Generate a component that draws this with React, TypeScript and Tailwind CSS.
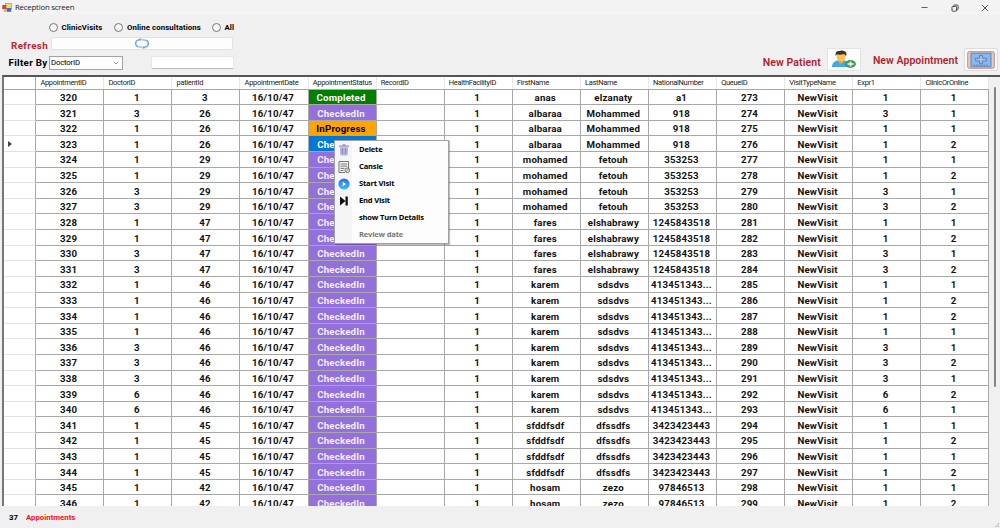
import { Minus, X, ChevronDown } from "lucide-react";
import { clsx } from "clsx";

interface Appointment {
  id: number;
  doctorId: number;
  patientId: number;
  status: string;
  firstName: string;
  lastName: string;
  nationalNumber: string;
  queueId: number;
  clinicOrOnline: number;
}

const COLUMNS = [
  "AppointmentID",
  "DoctorID",
  "patientId",
  "AppointmentDate",
  "AppointmentStatus",
  "RecordID",
  "HealthFacilityID",
  "FirstName",
  "LastName",
  "NationalNumber",
  "QueueID",
  "VisitTypeName",
  "Expr1",
  "ClinicOrOnline",
];

// patient id -> [first name, last name, national number]
const PATIENTS: Record<number, [string, string, string]> = {
  3: ["anas", "elzanaty", "a1"],
  26: ["albaraa", "Mohammed", "918"],
  29: ["mohamed", "fetouh", "353253"],
  47: ["fares", "elshabrawy", "1245843518"],
  46: ["karem", "sdsdvs", "413451343..."],
  45: ["sfddfsdf", "dfssdfs", "3423423443"],
  42: ["hosam", "zezo", "97846513"],
};

// [doctor, patient, clinic or online]
const VISITS: [number, number, number][] = [
  [1, 3, 1],
  [3, 26, 1],
  [1, 26, 1],
  [1, 26, 2],
  [1, 29, 1],
  [1, 29, 2],
  [3, 29, 1],
  [3, 29, 2],
  [1, 47, 1],
  [1, 47, 2],
  [3, 47, 1],
  [3, 47, 2],
  [1, 46, 1],
  [1, 46, 2],
  [1, 46, 2],
  [1, 46, 1],
  [3, 46, 1],
  [3, 46, 2],
  [3, 46, 1],
  [6, 46, 2],
  [6, 46, 1],
  [1, 45, 1],
  [1, 45, 2],
  [1, 45, 1],
  [1, 45, 2],
  [1, 42, 1],
  [1, 42, 2],
];

const SELECTED_ROW = 3;

const appointments: Appointment[] = VISITS.map(([doctorId, patientId, clinicOrOnline], i) => ({
  id: 320 + i,
  doctorId,
  patientId,
  status: i === 0 ? "Completed" : i === 2 ? "InProgress" : "CheckedIn",
  firstName: PATIENTS[patientId][0],
  lastName: PATIENTS[patientId][1],
  nationalNumber: PATIENTS[patientId][2],
  queueId: 273 + i,
  clinicOrOnline,
}));

const TitleBar = () => (
  <div className="flex h-[15px] shrink-0 items-center bg-[#f3f3f3] pl-[2px]">
    <svg viewBox="0 0 10 10" className="h-[10px] w-[10px]">
      <rect x="3.5" y="0.5" width="6" height="5.5" fill="#f4d77a" stroke="#a98b3c" strokeWidth="0.6" />
      <rect x="0.3" y="2" width="4" height="4" fill="#d8432f" />
      <rect x="4.6" y="5" width="4.6" height="3.8" fill="#3e6fc4" />
      <rect x="1.6" y="6.3" width="2.6" height="2.6" fill="#e9b53b" />
    </svg>
    <span className="ml-[3px] font-['Open_Sans',sans-serif] text-[7.8px] tracking-[-0.2px] text-[#222]">
      Reception screen
    </span>
    <div className="ml-auto flex items-center pr-[10px] text-[#333]">
      <Minus className="h-[9px] w-[9px]" strokeWidth={2} />
      <svg viewBox="0 0 8 8" className="ml-[22px] h-[8px] w-[8px]" fill="none" stroke="currentColor" strokeWidth="0.9">
        <rect x="1" y="2.4" width="4.6" height="4.8" rx="0.8" />
        <path d="M2.6 2.2C2.6 1.3 3 1 3.8 1h2c.9 0 1.4.5 1.4 1.4v2.200c0 .8-.4 1.200-1.300 1.200" />
      </svg>
      <X className="ml-[21px] h-[10px] w-[10px]" strokeWidth={2} />
    </div>
  </div>
);

const Radio = ({ label, className }: { label: string; className?: string }) => (
  <label className={clsx("flex items-center gap-[4px]", className)}>
    <span className="h-[9px] w-[9px] rounded-full border border-[#777] bg-[#f6f6f6]" />
    <span className="text-[7.8px] font-bold tracking-[0.1px] text-black">{label}</span>
  </label>
);

const RefreshIcon = () => (
  <svg viewBox="0 0 16 11" className="h-[11px] w-[16px]" fill="none" stroke="#78a6e6" strokeWidth="1.6">
    <path d="M6 1.8C3.5 1.8 1.6 3.4 1.6 5.5c0 1.4 .9 2.6 2.2 3.2" />
    <path d="M10 9.2c2.5 0 4.4-1.6 4.4-3.7 0-1.4-.9-2.6-2.2-3.2" />
    <path d="M5.2 .4h2.6L6.4 3.2zM10.8 10.6H8.2l1.4-2.8z" fill="#78a6e6" stroke="none" />
    <path d="M7.5 1.8h2.6l2.1.8M8.5 9.2H5.9l-2.1-.8" stroke="#8eb6ee" strokeWidth="1.3" />
  </svg>
);

const AddPatientIcon = () => (
  <svg viewBox="0 0 26 19" className="h-[19px] w-[26px]">
    <path d="M1 17c0-4.500 3-6.200 6.500-6.800h5c3.500.6 6.500 2.300 6.500 6.800z" fill="#3ba9ec" />
    <path d="M7.500 9.500h5v2.500l-2.500 2.500-2.500-2.500z" fill="#e6a23c" />
    <ellipse cx="10" cy="6.800" rx="4.400" ry="5" fill="#fcc24f" />
    <path d="M4.800 6C3.900 2.500 6 .6 8 1c3-1.200 7.500-.5 7.500 3.200 0 .7-.2 1.300-.6 1.800-.6-.8-1.200-1.500-2-1.900-2.200.7-4.900.8-6.700.2-.6.400-1 1-1.400 1.700z" fill="#3c3027" />
    <ellipse cx="19.500" cy="14" rx="5.400" ry="3.900" fill="#3f9c55" />
    <path d="M19.500 11.500v5M16.500 14h6" stroke="#fff" strokeWidth="1.500" />
  </svg>
);

const AddAppointmentIcon = () => (
  <svg viewBox="0 0 28 18" className="h-[18px] w-[28px]">
    <rect x="0.7" y="0.7" width="26.6" height="16.6" rx="1.5" fill="#e9c9b9" stroke="#b5837b" strokeWidth="0.9" />
    <rect x="4" y="2.2" width="20" height="13.6" fill="#7cbcf2" stroke="#7474a4" strokeWidth="0.9" />
    <path d="M12.600 4.500h2.800v2.800h4v2.600h-4v2.800h-2.800V9.900h-4V7.300h4z" fill="#9fc9ee" stroke="#6c6fa8" strokeWidth="0.9" />
    <path d="M6.5 14.200h15" stroke="#5b6f9c" strokeWidth="0.9" strokeDasharray="1.5 1" />
  </svg>
);

const Toolbar = () => (
  <div className="flex h-[60px] shrink-0 justify-between pr-[2px]">
    <div className="flex w-[240px] flex-col">
      <div className="flex h-[22px] items-center pt-[3px] pl-[48.5px]">
        <Radio label="ClinicVisits" className="w-[65.5px]" />
        <Radio label="Online consultations" className="w-[97.5px] whitespace-nowrap" />
        <Radio label="All" />
      </div>
      <div className="flex h-[13px] items-center">
        <span className="w-[51px] pt-[4px] pl-[11px] text-[9.8px] leading-none font-bold tracking-[0.4px] text-[#bb2733]">
          Refresh
        </span>
        <div className="flex h-[13px] w-[182px] items-center justify-center rounded-[2px] border border-[#e2e2e2] bg-[#fdfdfd]">
          <RefreshIcon />
        </div>
      </div>
      <div className="flex h-[25px] items-center">
        <span className="w-[49px] pl-[8.5px] text-[9.8px] leading-none font-bold tracking-[0.3px] whitespace-nowrap text-black">
          Filter By
        </span>
        <div className="flex h-[14px] w-[74px] items-center justify-between border border-[#a3a3a3] bg-white pr-[2px] pl-[1px]">
          <span className="text-[7.8px] tracking-[-0.2px] text-black">DoctorID</span>
          <ChevronDown className="h-[8px] w-[8px] text-[#666]" />
        </div>
        <div className="ml-[28px] h-[13px] w-[83px] rounded-[2px] border border-[#e6e6e6] border-b-[#bbb] bg-white" />
      </div>
    </div>

    <div className="flex items-end pb-[4px]">
      <span className="pb-[3px] text-[10.5px] leading-none font-semibold tracking-[0.1px] text-[#b22230]">
        New Patient
      </span>
      <div className="ml-[6px] flex h-[23px] w-[34px] items-center justify-center rounded-[2px] border border-[#e3e3e3] bg-[#fdfdfd]">
        <AddPatientIcon />
      </div>
      <span className="ml-[12px] pb-[5px] text-[10.5px] leading-none font-semibold tracking-[0.05px] text-[#b22230]">
        New Appointment
      </span>
      <div className="ml-[6px] flex h-[23px] w-[34px] items-center justify-center rounded-[2px] border border-[#dcdcdc] bg-[#fdfdfd]">
        <AddAppointmentIcon />
      </div>
    </div>
  </div>
);

const GridRow = ({ row, selected }: { row: Appointment; selected: boolean }) => {
  const cells = [
    row.id,
    row.doctorId,
    row.patientId,
    "16/10/47",
    row.status,
    "",
    1,
    row.firstName,
    row.lastName,
    row.nationalNumber,
    row.queueId,
    "NewVisit",
    row.doctorId,
    row.clinicOrOnline,
  ];

  return (
    <div className="flex h-[15.62px] shrink-0">
      <div className="flex w-[32.2px] shrink-0 items-center border-r border-b border-r-[#a8a8a8] border-b-[#e2e2e2] pl-[4px]">
        {selected && (
          <svg viewBox="0 0 4 6" className="h-[6px] w-[4px]">
            <path d="M0 0l4 3-4 3z" fill="#444" />
          </svg>
        )}
      </div>
      {cells.map((cell, i) => (
        <div
          key={COLUMNS[i]}
          className={clsx(
            "flex w-[68.08px] shrink-0 items-center justify-center overflow-hidden border-r border-b border-[#a8a8a8] pt-[2px] pr-[2px] text-[9.7px] leading-none font-bold tracking-[0.18px]",
            i !== 4 && "text-[#111]",
            i === 4 && row.status === "Completed" && "bg-[#008000] text-white",
            i === 4 && row.status === "InProgress" && "bg-[#ffa500] text-black",
            i === 4 && row.status === "CheckedIn" && !selected && "bg-[#9370db] text-[#f3eefc]",
            i === 4 && selected && "bg-[#0078d7] text-white"
          )}
        >
          {cell}
        </div>
      ))}
    </div>
  );
};

const MENU_ITEMS = [
  {
    label: "Delete",
    icon: (
      <svg viewBox="0 0 12 12" className="h-[12px] w-[12px]">
        <path d="M1 2.2h10M4.5 1h3" stroke="#9492c4" strokeWidth="1.3" />
        <path d="M1.8 3.2h8.4L9.6 11.500H2.400z" fill="#b5b3dc" />
        <path d="M4.5 4.500v5.500M7.500 4.500v5.500" stroke="#8482b8" strokeWidth="0.9" />
      </svg>
    ),
  },
  {
    label: "Cansle",
    icon: (
      <svg viewBox="0 0 12 12" className="h-[12px] w-[12px]" fill="none" stroke="#555" strokeWidth="0.8">
        <path d="M7 11.500H1V.5h9.500V7" />
        <path d="M2.500 3h6.500M2.500 5.200h6.500M2.500 7.400h4M2.500 9.500h3" />
        <circle cx="9.300" cy="9.300" r="2.300" fill="#eee" />
        <path d="M7.800 10.800l3-3" />
      </svg>
    ),
  },
  {
    label: "Start Visit",
    icon: (
      <svg viewBox="0 0 12 12" className="h-[12px] w-[12px]">
        <defs>
          <linearGradient id="play" x1="0" y1="0" x2="0" y2="1">
            <stop offset="0" stopColor="#2f6be8" />
            <stop offset="1" stopColor="#2fc6f2" />
          </linearGradient>
        </defs>
        <circle cx="6" cy="6" r="5.600" fill="url(#play)" />
        <path d="M4.700 3.800L8.200 6 4.700 8.200z" fill="#fff" />
      </svg>
    ),
  },
  {
    label: "End Visit",
    icon: (
      <svg viewBox="0 0 12 12" className="h-[12px] w-[12px]">
        <path d="M2 1.500L7.500 6 2 10.500zM7.500 1.500H9.800v9H7.500z" fill="#111" />
      </svg>
    ),
  },
  { label: "show Turn Details" },
  { label: "Review date", disabled: true },
];

const ContextMenu = () => (
  <div className="absolute top-[140px] left-[334px] flex h-[104px] w-[115px] flex-col border border-[#a0a0a0] bg-[linear-gradient(to_right,#f5f5f5_17px,#fdfdfd_17px)] pt-[0.8px] shadow-[1px_1px_1px_rgba(0,0,0,0.25)]">
    {MENU_ITEMS.map((item) => (
      <div key={item.label} className="flex h-[16.95px] items-center">
        <span className="flex w-[24px] pl-[3px]">{item.icon}</span>
        <span
          className={clsx(
            "font-['Open_Sans',sans-serif] text-[7.6px] leading-none font-bold tracking-[-0.2px] whitespace-nowrap",
            item.disabled ? "text-[#777]" : "text-black"
          )}
        >
          {item.label}
        </span>
      </div>
    ))}
  </div>
);

export default function App() {
  return (
    <div className="relative flex h-[528px] w-[1000px] flex-col overflow-hidden bg-[#f0f0f0] font-['Roboto','Liberation_Sans',sans-serif]">
      <TitleBar />
      <Toolbar />

      <div className="ml-[2px] flex h-[431px] shrink-0 overflow-hidden border-t-2 border-l-2 border-t-[#555] border-l-[#777]">
        <div className="flex w-[985.4px] shrink-0 flex-col bg-white">
          <div className="flex h-[12.6px] shrink-0 border-b border-[#a8a8a8]">
            <div className="w-[32.2px] shrink-0 border-r border-[#a8a8a8]" />
            {COLUMNS.map((col) => (
              <div
                key={col}
                className="flex w-[68.08px] shrink-0 items-center border-r border-[#e8e8e8] pl-[4.2px] text-[7.5px] leading-none tracking-[-0.32px] whitespace-nowrap text-[#222]"
              >
                {col}
              </div>
            ))}
          </div>
          {appointments.map((row, i) => (
            <GridRow key={row.id} row={row} selected={i === SELECTED_ROW} />
          ))}
        </div>
        {/* Scrollbar */}
        <div className="flex flex-1 justify-center pt-[10px]">
          <div className="h-[300px] w-[2px] rounded-full bg-[#858585]" />
        </div>
      </div>

      <div className="flex flex-1 items-center gap-[8px] pt-[2px] pl-[9px] text-[7.8px] font-bold">
        <span className="text-black">37</span>
        <span className="text-[#f5121d]">Appointments</span>
      </div>

      {/* Resize grip */}
      <svg viewBox="0 0 5 5" className="absolute right-0 bottom-0 h-[5px] w-[5px]" fill="#b5b5b5">
        <path d="M3 0h1v1H3zM1.500 1.500h1v1h-1zM3 1.500h1v1H3zM0 3h1v1H0zM1.500 3h1v1h-1zM3 3h1v1H3z" />
      </svg>

      <ContextMenu />
    </div>
  );
}
